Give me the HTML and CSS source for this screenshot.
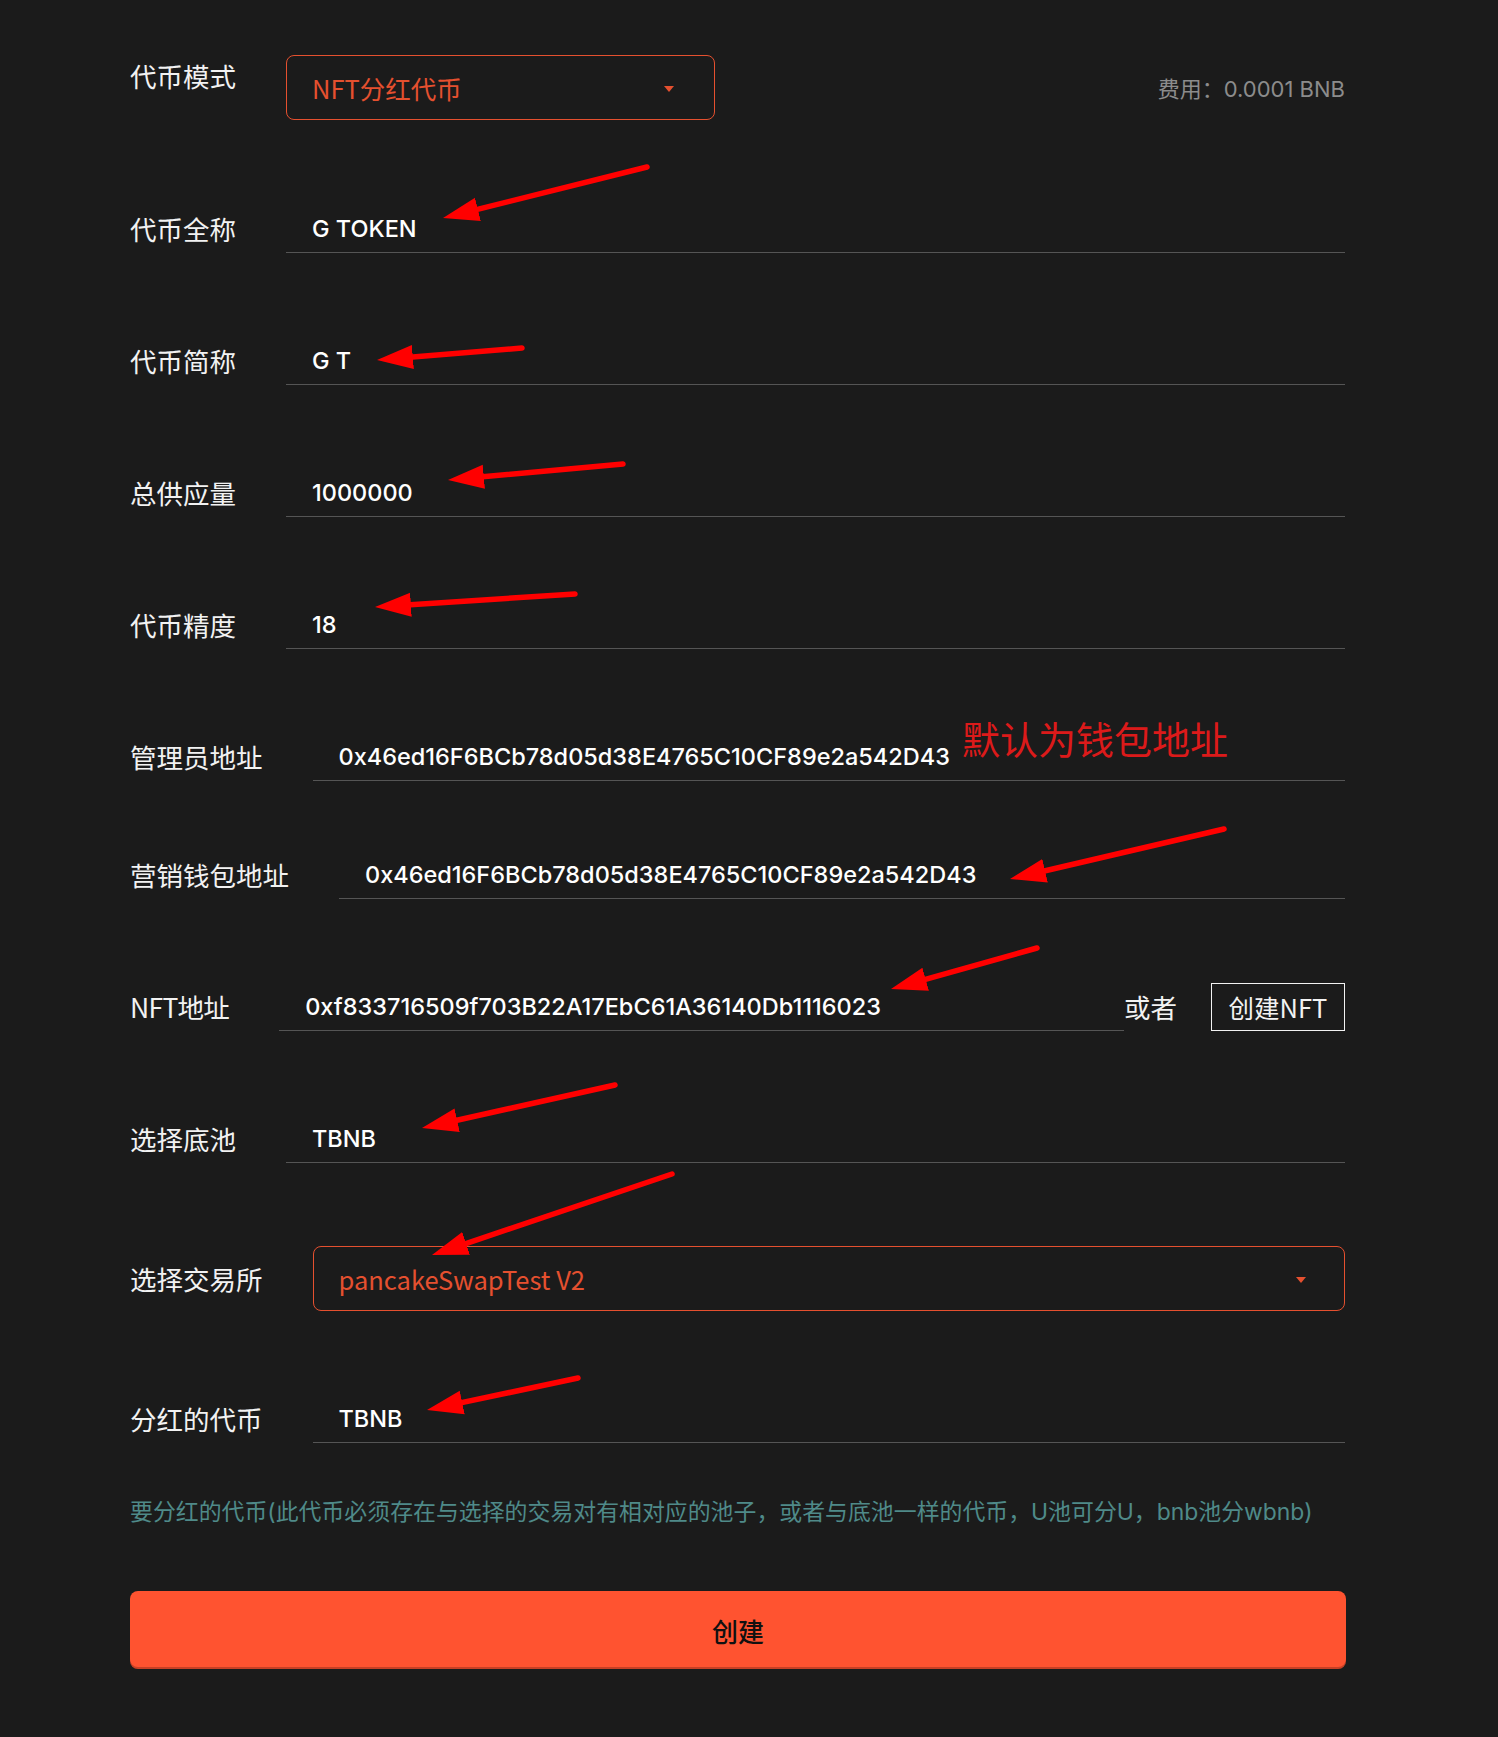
FILE: index.html
```html
<!DOCTYPE html>
<html lang="zh-CN">
<head>
<meta charset="utf-8">
<title>创建代币</title>
<link rel="stylesheet" href="styles.css">
</head>
<body>
<div class="page">
  <form class="form">
    <div class="row row-mode">
      <label class="label label-top">代币模式</label>
      <div class="select select-mode"><span>NFT分红代币</span><i class="caret"></i></div>
      <div class="fee">费用：0.0001 BNB</div>
    </div>
    <div class="row row-first">
      <label class="label">代币全称</label>
      <div class="field">G TOKEN</div>
    </div>
    <div class="row">
      <label class="label">代币简称</label>
      <div class="field">G T</div>
    </div>
    <div class="row">
      <label class="label">总供应量</label>
      <div class="field">1000000</div>
    </div>
    <div class="row">
      <label class="label">代币精度</label>
      <div class="field">18</div>
    </div>
    <div class="row">
      <label class="label">管理员地址</label>
      <div class="field">0x46ed16F6BCb78d05d38E4765C10CF89e2a542D43</div>
    </div>
    <div class="row row-tight">
      <label class="label">营销钱包地址</label>
      <div class="field">0x46ed16F6BCb78d05d38E4765C10CF89e2a542D43</div>
    </div>
    <div class="row">
      <label class="label label-nft">NFT地址</label>
      <div class="field">0xf833716509f703B22A17EbC61A36140Db1116023</div>
      <span class="or">或者</span>
      <button type="button" class="btn-nft">创建NFT</button>
    </div>
    <div class="row">
      <label class="label">选择底池</label>
      <div class="field">TBNB</div>
    </div>
    <div class="row">
      <label class="label">选择交易所</label>
      <div class="select select-dex"><span>pancakeSwapTest V2</span><i class="caret"></i></div>
    </div>
    <div class="row">
      <label class="label">分红的代币</label>
      <div class="field">TBNB</div>
    </div>
    <p class="hint">要分红的代币(此代币必须存在与选择的交易对有相对应的池子，或者与底池一样的代币，U池可分U，bnb池分wbnb)</p>
    <button type="button" class="btn-create">创建</button>
  </form>

  <div class="note">默认为钱包地址</div>

  <svg class="arrows" width="1498" height="1737" viewBox="0 0 1498 1737">
    <defs>
      <marker id="ah" viewBox="0 0 36 26" refX="36" refY="13" markerWidth="36" markerHeight="26" markerUnits="userSpaceOnUse" orient="auto">
        <path d="M0,1 L36,13 L0,25 Z" fill="#ff0000"/>
      </marker>
    </defs>
    <g stroke="#ff0000" stroke-width="5.5" stroke-linecap="round" fill="none">
      <path d="M647,167 L443,218" pathLength="100" stroke-dasharray="90 100" marker-end="url(#ah)"/>
      <path d="M522,348 L377,360" pathLength="100" stroke-dasharray="88 100" marker-end="url(#ah)"/>
      <path d="M623,464 L448,480" pathLength="100" stroke-dasharray="88 100" marker-end="url(#ah)"/>
      <path d="M575,594 L375,607" pathLength="100" stroke-dasharray="90 100" marker-end="url(#ah)"/>
      <path d="M1224,829 L1010,879" pathLength="100" stroke-dasharray="90 100" marker-end="url(#ah)"/>
      <path d="M1037,948 L891,989" pathLength="100" stroke-dasharray="88 100" marker-end="url(#ah)"/>
      <path d="M615,1085 L422,1128" pathLength="100" stroke-dasharray="90 100" marker-end="url(#ah)"/>
      <path d="M672,1174 L432,1255" pathLength="100" stroke-dasharray="92 100" marker-end="url(#ah)"/>
      <path d="M578,1378 L427,1410" pathLength="100" stroke-dasharray="88 100" marker-end="url(#ah)"/>
    </g>
  </svg>
</div>
</body>
</html>
```

FILE: styles.css
```css
html, body {
  margin: 0;
  padding: 0;
  background: #1b1b1b;
}

body {
  font-family: "Inter", "Noto Sans CJK SC", sans-serif;
  color: #ffffff;
}

.page {
  position: relative;
  width: 1498px;
  min-height: 1737px;
}

.form {
  display: flex;
  flex-direction: column;
  width: 1215px;
  margin: 0 0 0 130px;
  padding-top: 55px;
}

.row {
  display: flex;
  align-items: center;
  margin-top: 83px;
}

.row-mode {
  margin-top: 0;
  align-items: center;
}

.row-first {
  margin-top: 84px;
}

.row-tight {
  margin-top: 69px;
}

.label {
  font-family: "Noto Sans CJK SC", sans-serif;
  font-size: 26.5px;
  line-height: 32px;
  color: #f2f2f2;
  white-space: nowrap;
  margin-right: 50px;
}

.label-top {
  align-self: flex-start;
  margin-top: 5px;
}

.label-nft {
  letter-spacing: -0.7px;
}

.field {
  flex: 1;
  box-sizing: border-box;
  height: 49px;
  border-bottom: 1px solid #555555;
  padding-left: 26px;
  display: flex;
  align-items: center;
  font-family: "Inter", "Noto Sans CJK SC", sans-serif;
  font-weight: 500;
  font-size: 23.5px;
  color: #ffffff;
  white-space: nowrap;
}

.select {
  box-sizing: border-box;
  height: 65px;
  border: 1px solid #e5502f;
  border-radius: 8px;
  display: flex;
  align-items: center;
  justify-content: space-between;
  padding: 0 40px 0 25px;
  font-family: "Noto Sans CJK SC", sans-serif;
  font-size: 25.5px;
  color: #e5502f;
}

.select-mode {
  width: 429px;
}

.select-dex {
  flex: 1;
  padding-right: 38px;
}

.caret {
  width: 0;
  height: 0;
  border-left: 5px solid transparent;
  border-right: 5px solid transparent;
  border-top: 6px solid #e5502f;
  margin-top: 2px;
}

.fee {
  margin-left: auto;
  font-family: "Inter", "Noto Sans CJK SC", sans-serif;
  font-size: 22px;
  color: #8c8c8c;
  margin-bottom: 2px;
}

.or {
  font-family: "Noto Sans CJK SC", sans-serif;
  font-size: 26.5px;
  color: #f2f2f2;
  white-space: nowrap;
}

.btn-nft {
  margin-left: 34px;
  box-sizing: border-box;
  width: 134px;
  height: 48px;
  background: transparent;
  border: 1px solid #f2f2f2;
  border-radius: 0;
  color: #f2f2f2;
  font-family: "Noto Sans CJK SC", sans-serif;
  font-size: 25.5px;
  padding: 0;
  white-space: nowrap;
}

.hint {
  margin: 52px 0 0;
  font-family: "Inter", "Noto Sans CJK SC", sans-serif;
  font-size: 22.9px;
  line-height: 34px;
  color: #4f8a89;
  white-space: nowrap;
}

.btn-create {
  margin-top: 62px;
  width: 1216px;
  height: 78px;
  border: none;
  border-radius: 8px;
  background: #ff5330;
  box-shadow: inset 0 -2px 0 rgba(0, 0, 0, 0.22);
  font-family: "Noto Sans CJK SC", sans-serif;
  font-size: 26px;
  font-weight: 500;
  color: #111111;
}

.note {
  position: absolute;
  left: 962px;
  top: 716px;
  font-family: "Noto Sans CJK SC", sans-serif;
  font-size: 38px;
  line-height: 44px;
  color: #dc1a1a;
  white-space: nowrap;
}

.arrows {
  position: absolute;
  left: 0;
  top: 0;
  pointer-events: none;
}
```
